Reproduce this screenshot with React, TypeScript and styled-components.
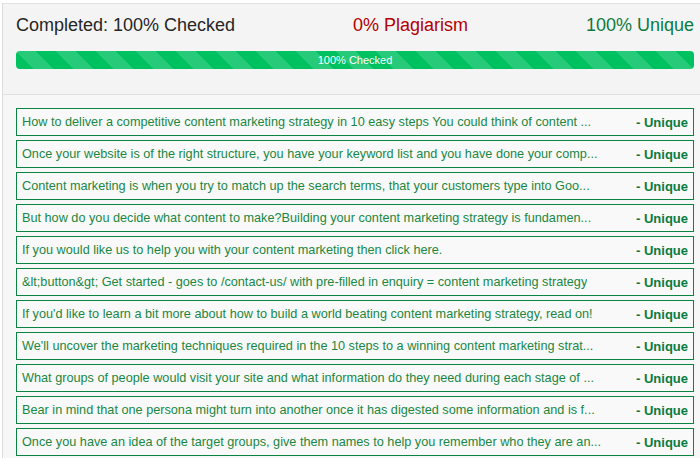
import React from "react";
import styled, { createGlobalStyle } from "styled-components";

const GlobalStyle = createGlobalStyle`
  html, body {
    margin: 0;
    padding: 0;
    background: #ffffff;
    overflow: hidden;
  }
  body {
    font-family: "Liberation Sans", Arial, Helvetica, sans-serif;
  }
`;

const rows = [
  "How to deliver a competitive content marketing strategy in 10 easy steps You could think of content ...",
  "Once your website is of the right structure, you have your keyword list and you have done your comp...",
  "Content marketing is when you try to match up the search terms, that your customers type into Goo...",
  "But how do you decide what content to make?Building your content marketing strategy is fundamen...",
  "If you would like us to help you with your content marketing then click here.",
  "&lt;button&gt; Get started - goes to /contact-us/ with pre-filled in enquiry = content marketing strategy",
  "If you'd like to learn a bit more about how to build a world beating content marketing strategy, read on!",
  "We'll uncover the marketing techniques required in the 10 steps to a winning content marketing strat...",
  "What groups of people would visit your site and what information do they need during each stage of ...",
  "Bear in mind that one persona might turn into another once it has digested some information and is f...",
  "Once you have an idea of the target groups, give them names to help you remember who they are an...",
];

const App = () => {
  return (
    <>
      <GlobalStyle />
      <Panel>
        <Summary>
          <Stats>
            <Stat>Completed: 100% Checked</Stat>
            <Stat tone="#b30000">0% Plagiarism</Stat>
            <Stat tone="#0b7a3e">100% Unique</Stat>
          </Stats>
          <Progress>
            <Bar style={{ width: "100%" }}>100% Checked</Bar>
          </Progress>
        </Summary>
        <Results>
          {rows.map((text, i) => (
            <Row key={i}>
              <Sentence>{text}</Sentence>
              <Verdict>- Unique</Verdict>
            </Row>
          ))}
        </Results>
      </Panel>
    </>
  );
};

const Panel = styled.div`
  margin: 3px 0 0 2px;
  width: 698px;
  border-left: 1px solid #dcdcdc;
  border-top: 1px solid #e2e2e2;
  background: #f7f7f7;
`;

const Summary = styled.div`
  display: flex;
  flex-direction: column;
  height: 91px;
  padding: 10px 7px 0 13px;
  box-sizing: border-box;
  background: #f4f4f4;
  border-bottom: 1px solid #e0e0e0;
`;

const Stats = styled.div`
  display: flex;
  justify-content: space-between;
  align-items: center;
  height: 22px;
`;

const Stat = styled.span<{ tone?: string }>`
  font-size: 18px;
  color: ${(p) => p.tone || "#262626"};
  white-space: nowrap;
`;

const Progress = styled.div`
  margin-top: 15px;
  height: 18px;
  border-radius: 4px;
  background: #e8e8e8;
  overflow: hidden;
`;

const Bar = styled.div`
  height: 100%;
  background-color: #00c160;
  background-image: linear-gradient(
    45deg,
    rgba(255, 255, 255, 0.15) 25%,
    transparent 25%,
    transparent 50%,
    rgba(255, 255, 255, 0.15) 50%,
    rgba(255, 255, 255, 0.15) 75%,
    transparent 75%,
    transparent
  );
  background-size: 40px 40px;
  color: #ffffff;
  font-size: 11px;
  line-height: 18px;
  text-align: center;
`;

const Results = styled.div`
  display: flex;
  flex-direction: column;
  gap: 4px;
  padding: 13px 7px 20px 13px;
`;

const Row = styled.div`
  display: flex;
  align-items: center;
  justify-content: space-between;
  height: 28px;
  box-sizing: border-box;
  padding: 0 5px;
  border: 1px solid #0a8443;
  background: #f9f9f9;
  font-size: 12.7px;
`;

const Sentence = styled.span`
  color: #1a8744;
  white-space: nowrap;
  overflow: hidden;
`;

const Verdict = styled.span`
  color: #0b7a3e;
  font-weight: bold;
  font-size: 13px;
  white-space: nowrap;
  margin-left: 12px;
`;

export default App;
